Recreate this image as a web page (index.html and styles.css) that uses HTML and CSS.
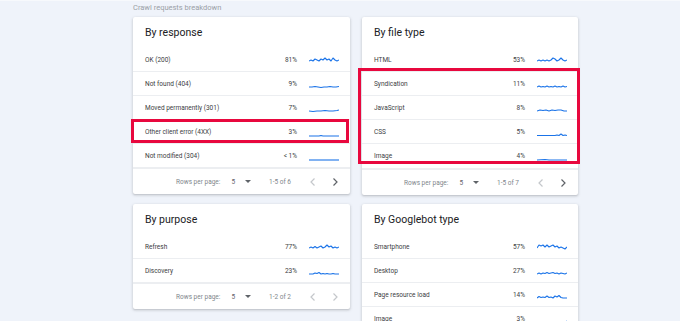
FILE: index.html
```html
<!DOCTYPE html>
<html lang="en">
<head>
  <meta charset="UTF-8" />
  <meta name="viewport" content="width=device-width, initial-scale=1.0"/>
  <title>Crawl requests breakdown</title>
  <link rel="stylesheet" href="styles.css">
</head>
<body>

<div class="page">
  <div class="caption">Crawl requests breakdown</div>

  <div class="grid">

    <!-- by response -->
    <div class="card">
      <div class="card-head">By response</div>
      <div class="row">
        <span class="label">OK (200)</span><span class="pct">81%</span>
        <svg class="spark" viewBox="0 0 30 10"><polyline points="0,6 2,5 4,6 6,4 8,5 10,6 12,4 14,5 16,3 18,5 20,4 22,6 24,3 26,5 28,6 30,5"/></svg>
      </div>
      <div class="row">
        <span class="label">Not found (404)</span><span class="pct">9%</span>
        <svg class="spark" viewBox="0 0 30 10"><polyline points="0,8 3,8 6,7.5 9,8 12,8.5 15,8 18,8 21,7.5 24,8 27,8 30,7.5"/></svg>
      </div>
      <div class="row">
        <span class="label">Moved permanently (301)</span><span class="pct">7%</span>
        <svg class="spark" viewBox="0 0 30 10"><polyline points="0,8 4,8.5 8,8 12,8 16,7.5 20,8 24,8 28,7.5 30,7"/></svg>
      </div>
      <div class="row marked">
        <span class="label">Other client error (4XX)</span><span class="pct">3%</span>
        <svg class="spark" viewBox="0 0 30 10"><polyline points="0,9 10,9 12,8.5 14,9 30,9"/></svg>
      </div>
      <div class="row">
        <span class="label">Not modified (304)</span><span class="pct">&lt; 1%</span>
        <svg class="spark" viewBox="0 0 30 10"><polyline points="0,9 30,9"/></svg>
      </div>
      <div class="card-foot">
        <span class="rpp">Rows per page:</span>
        <span class="size">5</span>
        <span class="caret"></span>
        <span class="range">1-5 of 6</span>
        <svg class="chev off" viewBox="0 0 16 16"><path d="M9.5 4.5 6 8l3.5 3.5"/></svg>
        <svg class="chev" viewBox="0 0 16 16"><path d="M6.5 4.5 10 8l-3.5 3.5"/></svg>
      </div>
    </div>

    <!-- by file type -->
    <div class="card">
      <div class="card-head">By file type</div>
      <div class="row">
        <span class="label">HTML</span><span class="pct">53%</span>
        <svg class="spark" viewBox="0 0 30 10"><polyline points="0,6 2,5 4,6 6,5 8,6 10,5 12,6 14,5 16,3 18,4 20,6 22,5 24,3 26,5 28,6 30,5"/></svg>
      </div>
      <div class="group">
        <div class="row">
          <span class="label">Syndication</span><span class="pct">11%</span>
          <svg class="spark" viewBox="0 0 30 10"><polyline points="0,8 2,7 4,8 6,7.5 8,8 10,7 12,8 14,7.5 16,8 18,7 20,8 22,7.5 24,8 26,7 28,8 30,7.5"/></svg>
        </div>
        <div class="row">
          <span class="label">JavaScript</span><span class="pct">8%</span>
          <svg class="spark" viewBox="0 0 30 10"><polyline points="0,8 3,7 6,7.5 9,7 12,8 15,7 18,7.5 21,7 24,7 27,8 30,8"/></svg>
        </div>
        <div class="row">
          <span class="label">CSS</span><span class="pct">5%</span>
          <svg class="spark" viewBox="0 0 30 10"><polyline points="0,8.5 18,8.5 20,8 22,8.5 24,7 26,8.5 28,8 30,8.5"/></svg>
        </div>
        <div class="row">
          <span class="label">Image</span><span class="pct">4%</span>
          <svg class="spark" viewBox="0 0 30 10"><polyline points="0,9 8,8.5 12,9 30,9"/></svg>
        </div>
      </div>
      <div class="card-foot">
        <span class="rpp">Rows per page:</span>
        <span class="size">5</span>
        <span class="caret"></span>
        <span class="range">1-5 of 7</span>
        <svg class="chev off" viewBox="0 0 16 16"><path d="M9.5 4.5 6 8l3.5 3.5"/></svg>
        <svg class="chev" viewBox="0 0 16 16"><path d="M6.5 4.5 10 8l-3.5 3.5"/></svg>
      </div>
    </div>

    <!-- by purpose -->
    <div class="card">
      <div class="card-head">By purpose</div>
      <div class="row">
        <span class="label">Refresh</span><span class="pct">77%</span>
        <svg class="spark" viewBox="0 0 30 10"><polyline points="0,6 2,5 4,6 6,4.5 8,6 10,5 12,4 14,6 16,5 18,3 20,5 22,4 24,6 26,5 28,6 30,5"/></svg>
      </div>
      <div class="row">
        <span class="label">Discovery</span><span class="pct">23%</span>
        <svg class="spark" viewBox="0 0 30 10"><polyline points="0,8 4,8 6,7 8,7.5 10,6.5 12,8 14,7.5 16,8 18,7.5 20,8 22,8 24,7.5 26,8 30,8"/></svg>
      </div>
      <div class="card-foot">
        <span class="rpp">Rows per page:</span>
        <span class="size">5</span>
        <span class="caret"></span>
        <span class="range">1-2 of 2</span>
        <svg class="chev off" viewBox="0 0 16 16"><path d="M9.5 4.5 6 8l3.5 3.5"/></svg>
        <svg class="chev off" viewBox="0 0 16 16"><path d="M6.5 4.5 10 8l-3.5 3.5"/></svg>
      </div>
    </div>

    <!-- by googlebot type -->
    <div class="card">
      <div class="card-head">By Googlebot type</div>
      <div class="row">
        <span class="label">Smartphone</span><span class="pct">57%</span>
        <svg class="spark" viewBox="0 0 30 10"><polyline points="0,6 2,3 4,4 6,3 8,5 10,3 12,5 14,4 16,3 18,5 20,4 22,6 24,5 26,6 28,7 30,5"/></svg>
      </div>
      <div class="row">
        <span class="label">Desktop</span><span class="pct">27%</span>
        <svg class="spark" viewBox="0 0 30 10"><polyline points="0,8 2,7 4,8 6,7 8,7.5 10,6.5 12,7.5 14,7 16,6.5 18,7.5 20,7 22,8 24,7 26,7.5 28,8 30,7"/></svg>
      </div>
      <div class="row">
        <span class="label">Page resource load</span><span class="pct">14%</span>
        <svg class="spark" viewBox="0 0 30 10"><polyline points="0,8 2,6.5 4,7.5 6,7 8,7.5 10,6 12,7.5 14,7 16,8 18,6 20,7 22,5.5 24,7.5 26,8 30,8"/></svg>
      </div>
      <div class="row">
        <span class="label">Image</span><span class="pct">3%</span>
        <svg class="spark" viewBox="0 0 30 10"><polyline points="0,9 26,9 28,8.5 30,7"/></svg>
      </div>
    </div>

  </div>
</div>

</body>
</html>
```

FILE: styles.css
```css
* {
  margin: 0; padding: 0;
  box-sizing: border-box;
}
body {
  background: #eff3fa;
  font-family: 'Roboto', 'Liberation Sans', sans-serif;
  color: #3c4043;
}
.page {
  padding: 2px 0 0 133px;
  border-top: 1px solid #f7f9fc;
}
.caption {
  font-size: 7.5px;
  line-height: 10px;
  color: #9aa0a6;
  margin-bottom: 4px;
}
.grid {
  display: grid;
  grid-template-columns: 217px 216px;
  column-gap: 12px;
  row-gap: 9px;
  align-items: start;
}
.card {
  background: #fff;
  border-radius: 2px;
  box-shadow: 0 1px 2px rgba(60,64,67,0.22), 0 1px 3px 1px rgba(60,64,67,0.08);
}
.card-head {
  height: 31px;
  padding: 10px 12px 0;
  font-size: 10.5px;
  line-height: 12px;
  color: #202124;
}
.row {
  height: 24px;
  display: flex;
  align-items: center;
  padding: 0 11px 0 12px;
  border-bottom: 1px solid #eceef1;
  font-size: 6.5px;
  position: relative;
}
.row:last-of-type {
  border-bottom: none;
}
.label {
  flex: 1;
}
.pct {
  text-align: right;
}
.spark {
  width: 30px;
  height: 10px;
  margin-left: 12px;
  fill: none;
  stroke: #1a73e8;
  stroke-width: 1.1;
  stroke-linejoin: round;
}
.group {
  position: relative;
  border-bottom: 1px solid #eceef1;
}
.group .row:last-child {
  border-bottom: none;
}
.card-foot {
  height: 26px;
  border-top: 1px solid #eceef1;
  display: flex;
  align-items: center;
  justify-content: flex-end;
  padding-right: 7px;
  font-size: 6.5px;
  color: #80868b;
}
.card-foot .size {
  margin-left: 11px;
  color: #5f6368;
}
.caret {
  width: 0; height: 0;
  border-left: 3px solid transparent;
  border-right: 3px solid transparent;
  border-top: 3px solid #5f6368;
  margin: 0 18px 0 10px;
}
.range {
  margin-right: 8px;
}
.chev {
  width: 16px;
  height: 16px;
  fill: none;
  stroke: #5f6368;
  stroke-width: 1.2;
  margin-left: 6px;
}
.chev.off {
  stroke: #c4c7cb;
}

/* highlight frames */
.marked::after,
.group::after {
  content: '';
  position: absolute;
  border: 3px solid #e8083e;
}
.marked::after {
  top: -1px; bottom: 0;
  left: -2px; right: 1px;
}
.group::after {
  top: -4px; bottom: 4px;
  left: -4px; right: -2px;
}
```
